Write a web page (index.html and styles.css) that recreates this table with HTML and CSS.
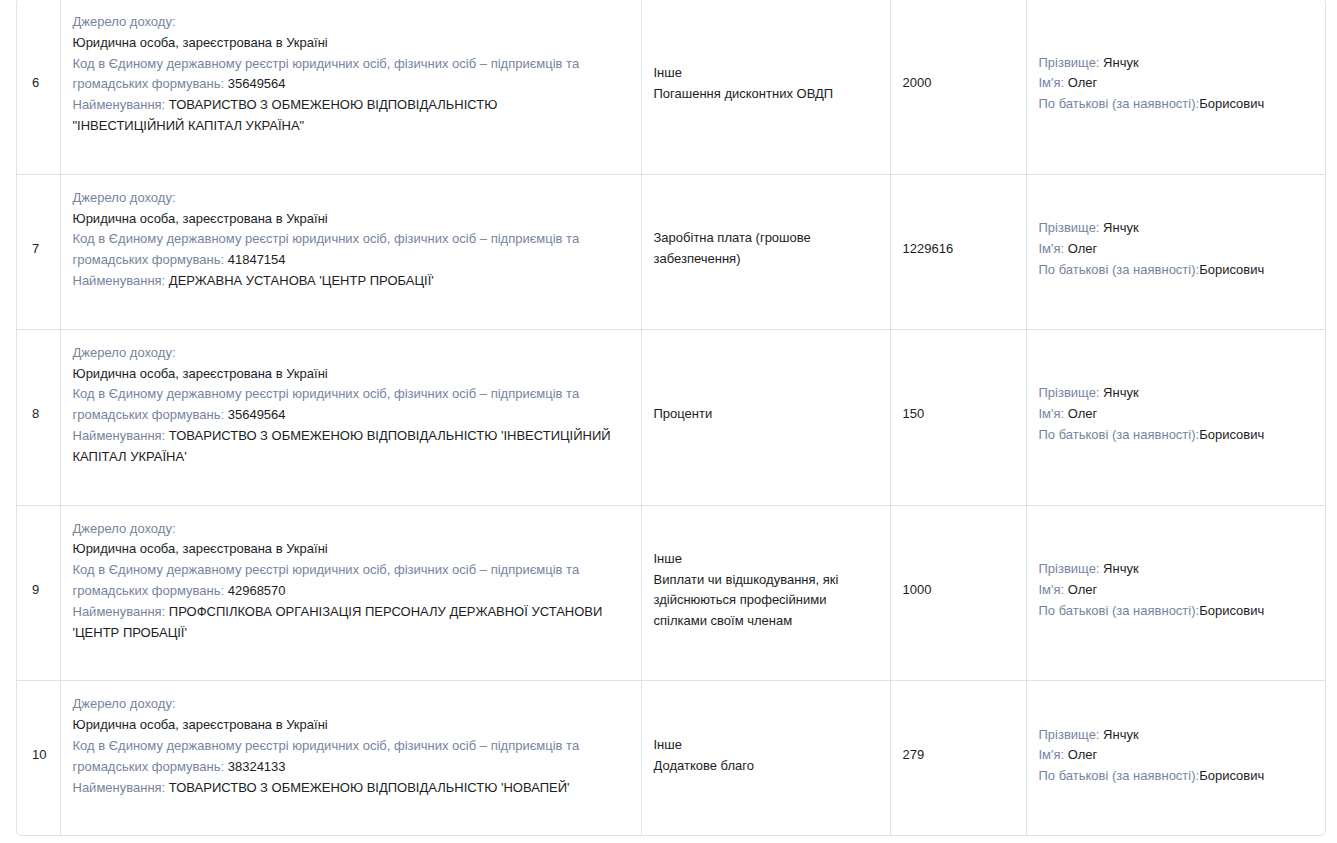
FILE: index.html
```html
<!DOCTYPE html>
<html lang="uk">
<head>
<meta charset="utf-8">
<title>Доходи</title>
<link rel="stylesheet" href="styles.css">
</head>
<body>
<div class="page">
  <div class="card">
    <table class="income">
      <colgroup>
        <col class="c-num"><col class="c-src"><col class="c-type"><col class="c-sum"><col class="c-who">
      </colgroup>
      <tbody>
        <tr>
          <td class="num">6</td>
          <td class="src">
            <div class="lbl">Джерело доходу:</div>
            <div>Юридична особа, зареєстрована в Україні</div>
            <div><span class="lbl">Код в Єдиному державному реєстрі юридичних осіб, фізичних осіб – підприємців та громадських формувань:</span> 35649564</div>
            <div><span class="lbl">Найменування:</span> ТОВАРИСТВО З ОБМЕЖЕНОЮ ВІДПОВІДАЛЬНІСТЮ "ІНВЕСТИЦІЙНИЙ КАПІТАЛ УКРАЇНА"</div>
          </td>
          <td class="mid"><div>Інше</div><div>Погашення дисконтних ОВДП</div></td>
          <td class="mid">2000</td>
          <td class="mid who">
            <div><span class="lbl">Прізвище:</span> Янчук</div>
            <div><span class="lbl">Ім'я:</span> Олег</div>
            <div><span class="lbl">По батькові (за наявності):</span>Борисович</div>
          </td>
        </tr>
        <tr>
          <td class="num">7</td>
          <td class="src">
            <div class="lbl">Джерело доходу:</div>
            <div>Юридична особа, зареєстрована в Україні</div>
            <div><span class="lbl">Код в Єдиному державному реєстрі юридичних осіб, фізичних осіб – підприємців та громадських формувань:</span> 41847154</div>
            <div><span class="lbl">Найменування:</span> ДЕРЖАВНА УСТАНОВА 'ЦЕНТР ПРОБАЦІЇ'</div>
          </td>
          <td class="mid"><div>Заробітна плата (грошове забезпечення)</div></td>
          <td class="mid">1229616</td>
          <td class="mid who">
            <div><span class="lbl">Прізвище:</span> Янчук</div>
            <div><span class="lbl">Ім'я:</span> Олег</div>
            <div><span class="lbl">По батькові (за наявності):</span>Борисович</div>
          </td>
        </tr>
        <tr>
          <td class="num">8</td>
          <td class="src">
            <div class="lbl">Джерело доходу:</div>
            <div>Юридична особа, зареєстрована в Україні</div>
            <div><span class="lbl">Код в Єдиному державному реєстрі юридичних осіб, фізичних осіб – підприємців та громадських формувань:</span> 35649564</div>
            <div><span class="lbl">Найменування:</span> ТОВАРИСТВО З ОБМЕЖЕНОЮ ВІДПОВІДАЛЬНІСТЮ 'ІНВЕСТИЦІЙНИЙ КАПІТАЛ УКРАЇНА'</div>
          </td>
          <td class="mid"><div>Проценти</div></td>
          <td class="mid">150</td>
          <td class="mid who">
            <div><span class="lbl">Прізвище:</span> Янчук</div>
            <div><span class="lbl">Ім'я:</span> Олег</div>
            <div><span class="lbl">По батькові (за наявності):</span>Борисович</div>
          </td>
        </tr>
        <tr>
          <td class="num">9</td>
          <td class="src">
            <div class="lbl">Джерело доходу:</div>
            <div>Юридична особа, зареєстрована в Україні</div>
            <div><span class="lbl">Код в Єдиному державному реєстрі юридичних осіб, фізичних осіб – підприємців та громадських формувань:</span> 42968570</div>
            <div><span class="lbl">Найменування:</span> ПРОФСПІЛКОВА ОРГАНІЗАЦІЯ ПЕРСОНАЛУ ДЕРЖАВНОЇ УСТАНОВИ 'ЦЕНТР ПРОБАЦІЇ'</div>
          </td>
          <td class="mid"><div>Інше</div><div>Виплати чи відшкодування, які здійснюються професійними спілками своїм членам</div></td>
          <td class="mid">1000</td>
          <td class="mid who">
            <div><span class="lbl">Прізвище:</span> Янчук</div>
            <div><span class="lbl">Ім'я:</span> Олег</div>
            <div><span class="lbl">По батькові (за наявності):</span>Борисович</div>
          </td>
        </tr>
        <tr>
          <td class="num">10</td>
          <td class="src">
            <div class="lbl">Джерело доходу:</div>
            <div>Юридична особа, зареєстрована в Україні</div>
            <div><span class="lbl">Код в Єдиному державному реєстрі юридичних осіб, фізичних осіб – підприємців та громадських формувань:</span> 38324133</div>
            <div><span class="lbl">Найменування:</span> ТОВАРИСТВО З ОБМЕЖЕНОЮ ВІДПОВІДАЛЬНІСТЮ 'НОВАПЕЙ'</div>
          </td>
          <td class="mid"><div>Інше</div><div>Додаткове благо</div></td>
          <td class="mid">279</td>
          <td class="mid who">
            <div><span class="lbl">Прізвище:</span> Янчук</div>
            <div><span class="lbl">Ім'я:</span> Олег</div>
            <div><span class="lbl">По батькові (за наявності):</span>Борисович</div>
          </td>
        </tr>
      </tbody>
    </table>
  </div>
</div>
</body>
</html>
```
FILE: styles.css
```css
html, body {
  margin: 0;
  padding: 0;
  background: #ffffff;
}
body {
  font-family: "Liberation Sans", Arial, sans-serif;
  font-size: 13px;
  line-height: 20.8px;
  color: #1b1e24;
}
.page {
  padding: 0 11px 0 16px;
  margin-top: -2px;
}
.card {
  border: 1px solid #dfe2e8;
  border-radius: 5px;
  overflow: hidden;
  width: 1308px;
}
.income {
  width: 100%;
  border-collapse: collapse;
  table-layout: fixed;
}
.c-num { width: 43px; }
.c-src { width: 581px; }
.c-type { width: 249px; }
.c-sum { width: 136px; }
.c-who { width: auto; }
.income td {
  border-left: 1px solid #dfe2e8;
  border-bottom: 1px solid #dfe2e8;
  padding: 13px 12px 18px;
  vertical-align: middle;
  text-align: left;
}
.income td:first-child { border-left: none; }
.income tr:last-child td { border-bottom: none; }
.income td.num { padding-left: 15px; padding-right: 4px; }
.income td.src { padding-right: 28px; padding-bottom: 37px; }
.lbl { color: #7684a0; }
```
